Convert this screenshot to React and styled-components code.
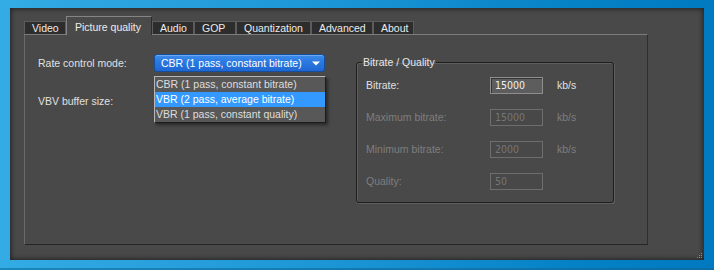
import React from "react";
import styled, { createGlobalStyle } from "styled-components";

const Global = createGlobalStyle`
  html, body { margin: 0; padding: 0; }
  body {
    width: 714px;
    height: 270px;
    overflow: hidden;
    font-family: "Liberation Sans", Arial, sans-serif;
    font-size: 10.5px;
  }
`;

const Desktop = styled.div`
  width: 714px;
  height: 270px;
  box-sizing: border-box;
  padding: 8px 10px 0 10px;
  background: linear-gradient(90deg, #33abe4 0%, #1d96d6 45%, #0582c6 80%, #0079c0 100%);
  position: relative;
  &::after {
    content: "";
    position: absolute;
    left: 0;
    right: 0;
    bottom: 0;
    height: 2px;
    background: linear-gradient(90deg, #1b86b8, #0a6da6);
  }
`;

const Window = styled.div`
  position: relative;
  width: 694px;
  height: 252px;
  box-sizing: border-box;
  background: #494949;
  box-shadow: inset 0 0 5px 1px rgba(0, 0, 0, 0.55);
  padding: 8px 0 0 14px;
  display: flex;
  flex-direction: column;
`;

const TabStrip = styled.div`
  display: flex;
  align-items: flex-end;
  height: 18px;
  position: relative;
  z-index: 2;
`;

const Tab = styled.div`
  box-sizing: border-box;
  width: ${(p) => p.$w}px;
  height: ${(p) => (p.$active ? 19 : 13)}px;
  margin-bottom: ${(p) => (p.$active ? -1 : 0)}px;
  padding-left: ${(p) => (p.$active ? 8 : 7)}px;
  padding-top: ${(p) => (p.$active ? 4 : 0)}px;
  line-height: 13px;
  color: #ececec;
  white-space: nowrap;
  background: ${(p) => (p.$active ? "#4a4a4a" : "#2d2d2d")};
  border-top: 1px solid ${(p) => (p.$active ? "#858585" : "#5c5c5c")};
  border-left: 1px solid ${(p) => (p.$active ? "#858585" : "#5c5c5c")};
  border-right: 1px solid ${(p) => (p.$active ? "#2c2c2c" : "#5c5c5c")};
`;

const Panel = styled.div`
  box-sizing: border-box;
  width: 624px;
  height: 211px;
  border-top: 1px solid #7c7c7c;
  border-left: 1px solid #6a6a6a;
  border-right: 1px solid #2e2e2e;
  border-bottom: 1px solid #252525;
  padding: 19px 0 0 13px;
  display: flex;
  align-items: flex-start;
  position: relative;
  z-index: 1;
`;

const LeftCol = styled.div`
  width: 318px;
  display: grid;
  grid-template-columns: 116px 172px;
  grid-auto-rows: 18px;
  row-gap: 20px;
  align-items: center;
`;

const Label = styled.div`
  color: ${(p) => (p.$disabled ? "#7e7e7e" : "#e0e0e0")};
  white-space: nowrap;
  line-height: 13px;
`;

const SelectWrap = styled.div`
  position: relative;
  width: 171px;
  height: 18px;
`;

const SelectBox = styled.div`
  box-sizing: border-box;
  width: 171px;
  height: 18px;
  border: 1px solid #134f9e;
  border-radius: 3px;
  background: linear-gradient(#3d8cec 0%, #2a78e0 45%, #1f67d2 100%);
  box-shadow: inset 0 1px 0 rgba(255, 255, 255, 0.25);
  color: #ffffff;
  padding-left: 6px;
  display: flex;
  align-items: center;
  justify-content: space-between;
  line-height: 14px;
`;

const Arrow = styled.svg`
  margin-right: 4px;
  flex: none;
`;

const DropList = styled.div`
  position: absolute;
  left: 0;
  top: 22px;
  width: 172px;
  box-sizing: border-box;
  border-top: 1px solid #b8b8b8;
  border-left: 1px solid #b8b8b8;
  border-right: 1px solid #1c1c1c;
  border-bottom: 1px solid #1c1c1c;
  box-shadow: 2px 2px 3px rgba(0, 0, 0, 0.45);
  background: #585858;
  z-index: 5;
`;

const Option = styled.div`
  height: 15px;
  line-height: 15px;
  padding-left: 1px;
  white-space: nowrap;
  color: ${(p) => (p.$selected ? "#ffffff" : "#dedede")};
  background: ${(p) => (p.$selected ? "#3399ff" : "transparent")};
`;

const GroupBox = styled.fieldset`
  box-sizing: border-box;
  width: 258px;
  height: 147px;
  margin: 2px 0 0 0;
  padding: 9px 0 0 0;
  border: 1px solid #1f1f1f;
  border-radius: 3px;
  box-shadow: 1px 1px 0 #5e5e5e, inset 1px 1px 0 #5e5e5e;
  min-width: 0;
`;

const Legend = styled.legend`
  margin-left: 5px;
  padding: 0 1px;
  line-height: 12px;
  color: #e8e8e8;
`;

const FieldGrid = styled.div`
  margin-left: 9px;
  display: grid;
  grid-template-columns: 124px 53px auto;
  grid-auto-rows: 17px;
  row-gap: 15px;
  align-items: center;
`;

const Unit = styled.div`
  padding-left: 14px;
  color: ${(p) => (p.$disabled ? "#7e7e7e" : "#e0e0e0")};
  line-height: 13px;
`;

const Input = styled.div`
  box-sizing: border-box;
  width: 53px;
  height: 17px;
  padding-left: 4px;
  line-height: 15px;
  font-family: "DejaVu Sans Condensed", "Liberation Sans Narrow", "Liberation Sans", sans-serif;
  font-size: 10.5px;
  color: ${(p) => (p.$disabled ? "#767676" : "#f0f0f0")};
  background: ${(p) => (p.$disabled ? "#484848" : "#5d5d5d")};
  border: 1px solid ${(p) => (p.$disabled ? "#6e6e6e" : "#8e8e8e")};
  box-shadow: ${(p) => (p.$disabled ? "none" : "inset 1px 1px 0 #353535")};
`;

const Grip = styled.svg`
  position: absolute;
  right: 1px;
  bottom: 1px;
`;

const tabs = [
  ["Video", 42],
  ["Picture quality", 86],
  ["Audio", 42],
  ["GOP", 42],
  ["Quantization", 75],
  ["Advanced", 62],
  ["About", 41],
];

const fields = [
  { label: "Bitrate:", value: "15000", unit: "kb/s", disabled: false },
  { label: "Maximum bitrate:", value: "15000", unit: "kb/s", disabled: true },
  { label: "Minimum bitrate:", value: "2000", unit: "kb/s", disabled: true },
  { label: "Quality:", value: "50", unit: "", disabled: true },
];

const options = [
  "CBR (1 pass, constant bitrate)",
  "VBR (2 pass, average bitrate)",
  "VBR (1 pass, constant quality)",
];

export default function App() {
  return (
    <>
      <Global />
      <Desktop>
        <Window>
          <TabStrip>
            {tabs.map(([name, w]) => (
              <Tab key={name} $w={w} $active={name === "Picture quality"}>
                {name}
              </Tab>
            ))}
          </TabStrip>
          <Panel>
            <LeftCol>
              <Label>Rate control mode:</Label>
              <SelectWrap>
                <SelectBox>
                  <span>{options[0]}</span>
                  <Arrow width="8" height="5" viewBox="0 0 8 5">
                    <path d="M0 0.5 L8 0.5 L4 4.5 Z" fill="#ffffff" />
                  </Arrow>
                </SelectBox>
                <DropList>
                  {options.map((o, i) => (
                    <Option key={o} $selected={i === 1}>
                      {o}
                    </Option>
                  ))}
                </DropList>
              </SelectWrap>
              <Label>VBV buffer size:</Label>
              <div />
            </LeftCol>
            <GroupBox>
              <Legend>Bitrate / Quality</Legend>
              <FieldGrid>
                {fields.map((f) => (
                  <React.Fragment key={f.label}>
                    <Label $disabled={f.disabled}>{f.label}</Label>
                    <Input $disabled={f.disabled}>{f.value}</Input>
                    <Unit $disabled={f.disabled}>{f.unit}</Unit>
                  </React.Fragment>
                ))}
              </FieldGrid>
            </GroupBox>
          </Panel>
          <Grip width="6" height="6" viewBox="0 0 6 6">
            <rect x="4" y="0" width="1" height="1" fill="#8a8a8a" />
            <rect x="2" y="2" width="1" height="1" fill="#8a8a8a" />
            <rect x="4" y="2" width="1" height="1" fill="#8a8a8a" />
            <rect x="0" y="4" width="1" height="1" fill="#8a8a8a" />
            <rect x="2" y="4" width="1" height="1" fill="#8a8a8a" />
            <rect x="4" y="4" width="1" height="1" fill="#8a8a8a" />
          </Grip>
        </Window>
      </Desktop>
    </>
  );
}
